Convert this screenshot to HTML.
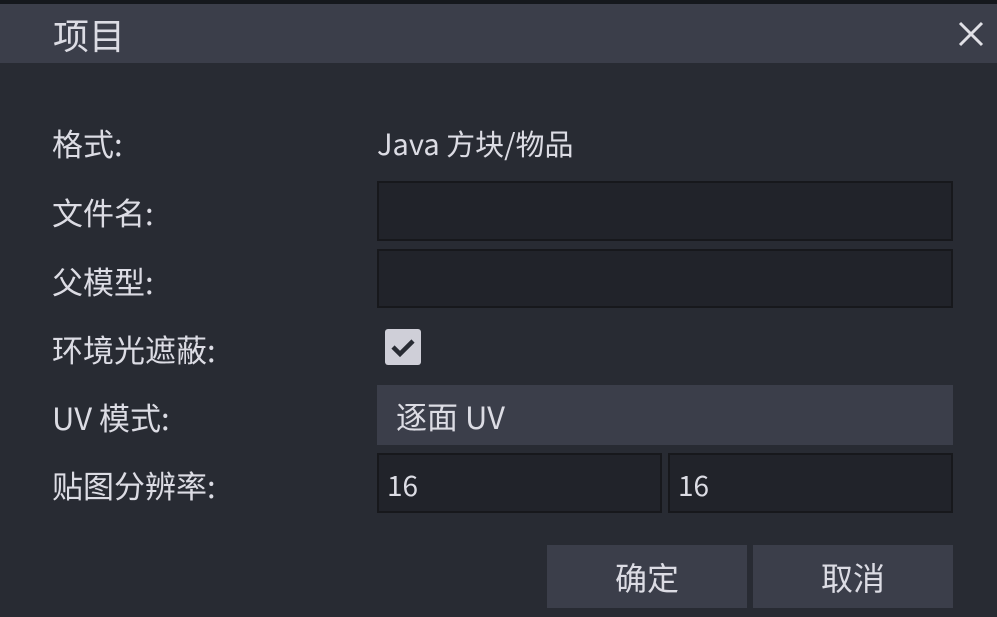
<html><head><style>
body{margin:0;width:997px;height:617px;background:#282b33;position:relative;overflow:hidden;font-family:"Noto Sans CJK SC","Liberation Sans",sans-serif;color:#dcdce4}
div{position:absolute;box-sizing:border-box;white-space:nowrap}
.lbl{left:52px;font-size:31px;line-height:40px}
.in{background:#21232a;border:2px solid #17181c}
.btn{background:#3b3e4a;font-size:32px;text-align:center;line-height:64px}
</style></head><body>
<div style="left:0;top:0;width:997px;height:4px;background:#15181d"></div>
<div style="left:0;top:4px;width:997px;height:59px;background:#3b3e4a"></div>
<div style="left:53px;top:10px;font-size:36px;line-height:48px">项目</div>
<div style="left:955px;top:18px;width:32px;height:32px"><svg width="32" height="32"><path d="M5 5L27 27M27 5L5 27" stroke="#e0e0e6" stroke-width="3"/></svg></div>
<div class="lbl" style="top:123px">格式:</div>
<div style="left:377px;top:123px;font-size:29px;line-height:40px">Java 方块/物品</div>
<div class="lbl" style="top:192px">文件名:</div>
<div class="in" style="left:377px;top:181px;width:576px;height:60px"></div>
<div class="lbl" style="top:261px">父模型:</div>
<div class="in" style="left:377px;top:249px;width:576px;height:59px"></div>
<div class="lbl" style="top:329px">环境光遮蔽:</div>
<div style="left:385px;top:329px;width:36px;height:36px;background:#cfcfd8;border-radius:3px"><svg width="36" height="36"><path d="M8 18L15 25L28 12" stroke="#282b33" stroke-width="4.5" fill="none"/></svg></div>
<div class="lbl" style="top:397px">UV 模式:</div>
<div style="left:377px;top:385px;width:576px;height:60px;background:#3b3e4a;padding-left:19px;font-size:31px;line-height:62px">逐面 UV</div>
<div class="lbl" style="top:465px">贴图分辨率:</div>
<div class="in" style="left:377px;top:453px;width:285px;height:60px;padding-left:8px;font-size:28px;line-height:60px">16</div>
<div class="in" style="left:668px;top:453px;width:285px;height:60px;padding-left:8px;font-size:28px;line-height:60px">16</div>
<div class="btn" style="left:547px;top:545px;width:200px;height:63px">确定</div>
<div class="btn" style="left:753px;top:545px;width:200px;height:63px">取消</div>
</body></html>
